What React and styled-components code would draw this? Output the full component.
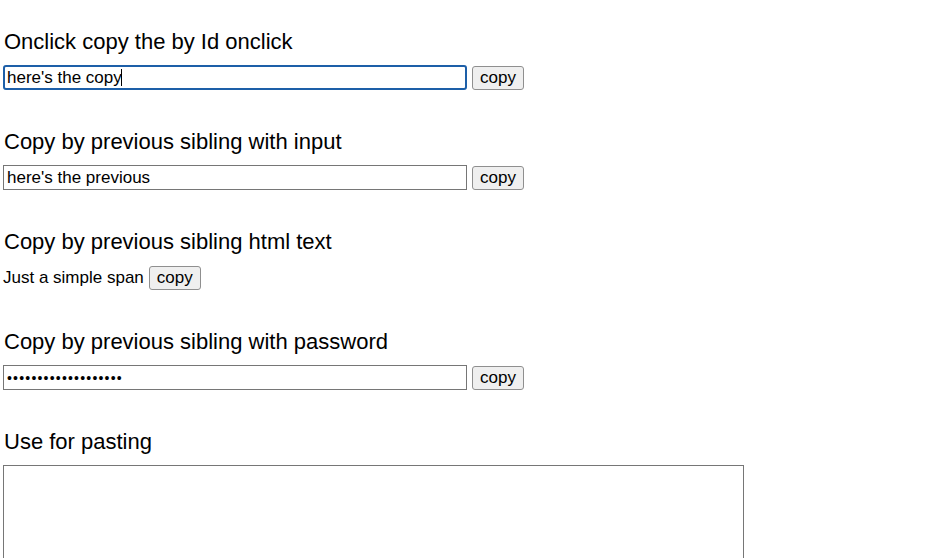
import React from "react";
import styled, { createGlobalStyle, css } from "styled-components";

const Global = createGlobalStyle`
  html, body { margin: 0; padding: 0; background: #ffffff; }
  body { font-family: "Liberation Sans", Arial, sans-serif; color: #000; }
`;

const Page = styled.main`
  padding: 30px 0 0 3px;
  display: flex;
  flex-direction: column;
`;

const Section = styled.section`
  display: flex;
  flex-direction: column;
  gap: 11px;
  margin-bottom: 40px;
`;

const Heading = styled.h3`
  margin: 0 0 0 1px;
  font-size: 22px;
  line-height: 24px;
  font-weight: 400;
`;

const Row = styled.div`
  display: flex;
  align-items: center;
  gap: 5px;
  height: 25px;
`;

const TextInput = styled.input`
  box-sizing: border-box;
  width: 464px;
  height: 25px;
  margin: 0;
  padding: 0 3px;
  border: 1px solid #767676;
  border-radius: 0;
  font-family: "Liberation Sans", Arial, sans-serif;
  font-size: 17px;
  color: #000;
  background: #fff;
  outline: none;
  ${(p) =>
    p.$focused &&
    css`
      border: 2px solid #1d5fa8;
      border-radius: 3px;
      padding: 0 2px;
    `}
  ${(p) =>
    p.type === "password" &&
    css`
      font-size: 14px;
      letter-spacing: 1.2px;
    `}
`;

const Button = styled.button`
  box-sizing: border-box;
  height: 24px;
  margin: 0;
  padding: 0 7px;
  border: 1px solid #8f8f8f;
  border-radius: 3px;
  background: #efefef;
  font-family: "Liberation Sans", Arial, sans-serif;
  font-size: 17px;
  line-height: 20px;
  color: #000;
`;

const Plain = styled.span`
  font-size: 17px;
  line-height: 20px;
`;

const Caret = styled.span`
  position: absolute;
  top: 4px;
  width: 1px;
  height: 17px;
  background: #000;
`;

const Wrap = styled.span`
  position: relative;
  display: inline-flex;
`;

const PasteArea = styled.textarea`
  box-sizing: border-box;
  width: 741px;
  height: 130px;
  margin: 0;
  padding: 2px;
  border: 1px solid #767676;
  resize: none;
  font-family: "Liberation Sans", Arial, sans-serif;
  font-size: 17px;
  outline: none;
`;

export default function App() {
  return (
    <>
      <Global />
      <Page>
        <Section>
          <Heading>Onclick copy the by Id onclick</Heading>
          <Row>
            <Wrap>
              <TextInput $focused defaultValue="here's the copy" readOnly />
              <Caret style={{ left: "118px" }} />
            </Wrap>
            <Button>copy</Button>
          </Row>
        </Section>
        <Section>
          <Heading>Copy by previous sibling with input</Heading>
          <Row>
            <TextInput defaultValue="here's the previous" />
            <Button>copy</Button>
          </Row>
        </Section>
        <Section>
          <Heading>Copy by previous sibling html text</Heading>
          <Row>
            <Plain>Just a simple span</Plain>
            <Button>copy</Button>
          </Row>
        </Section>
        <Section>
          <Heading>Copy by previous sibling with password</Heading>
          <Row>
            <TextInput type="password" defaultValue="secretpassword12345" />
            <Button>copy</Button>
          </Row>
        </Section>
        <Section>
          <Heading>Use for pasting</Heading>
          <PasteArea />
        </Section>
      </Page>
    </>
  );
}
